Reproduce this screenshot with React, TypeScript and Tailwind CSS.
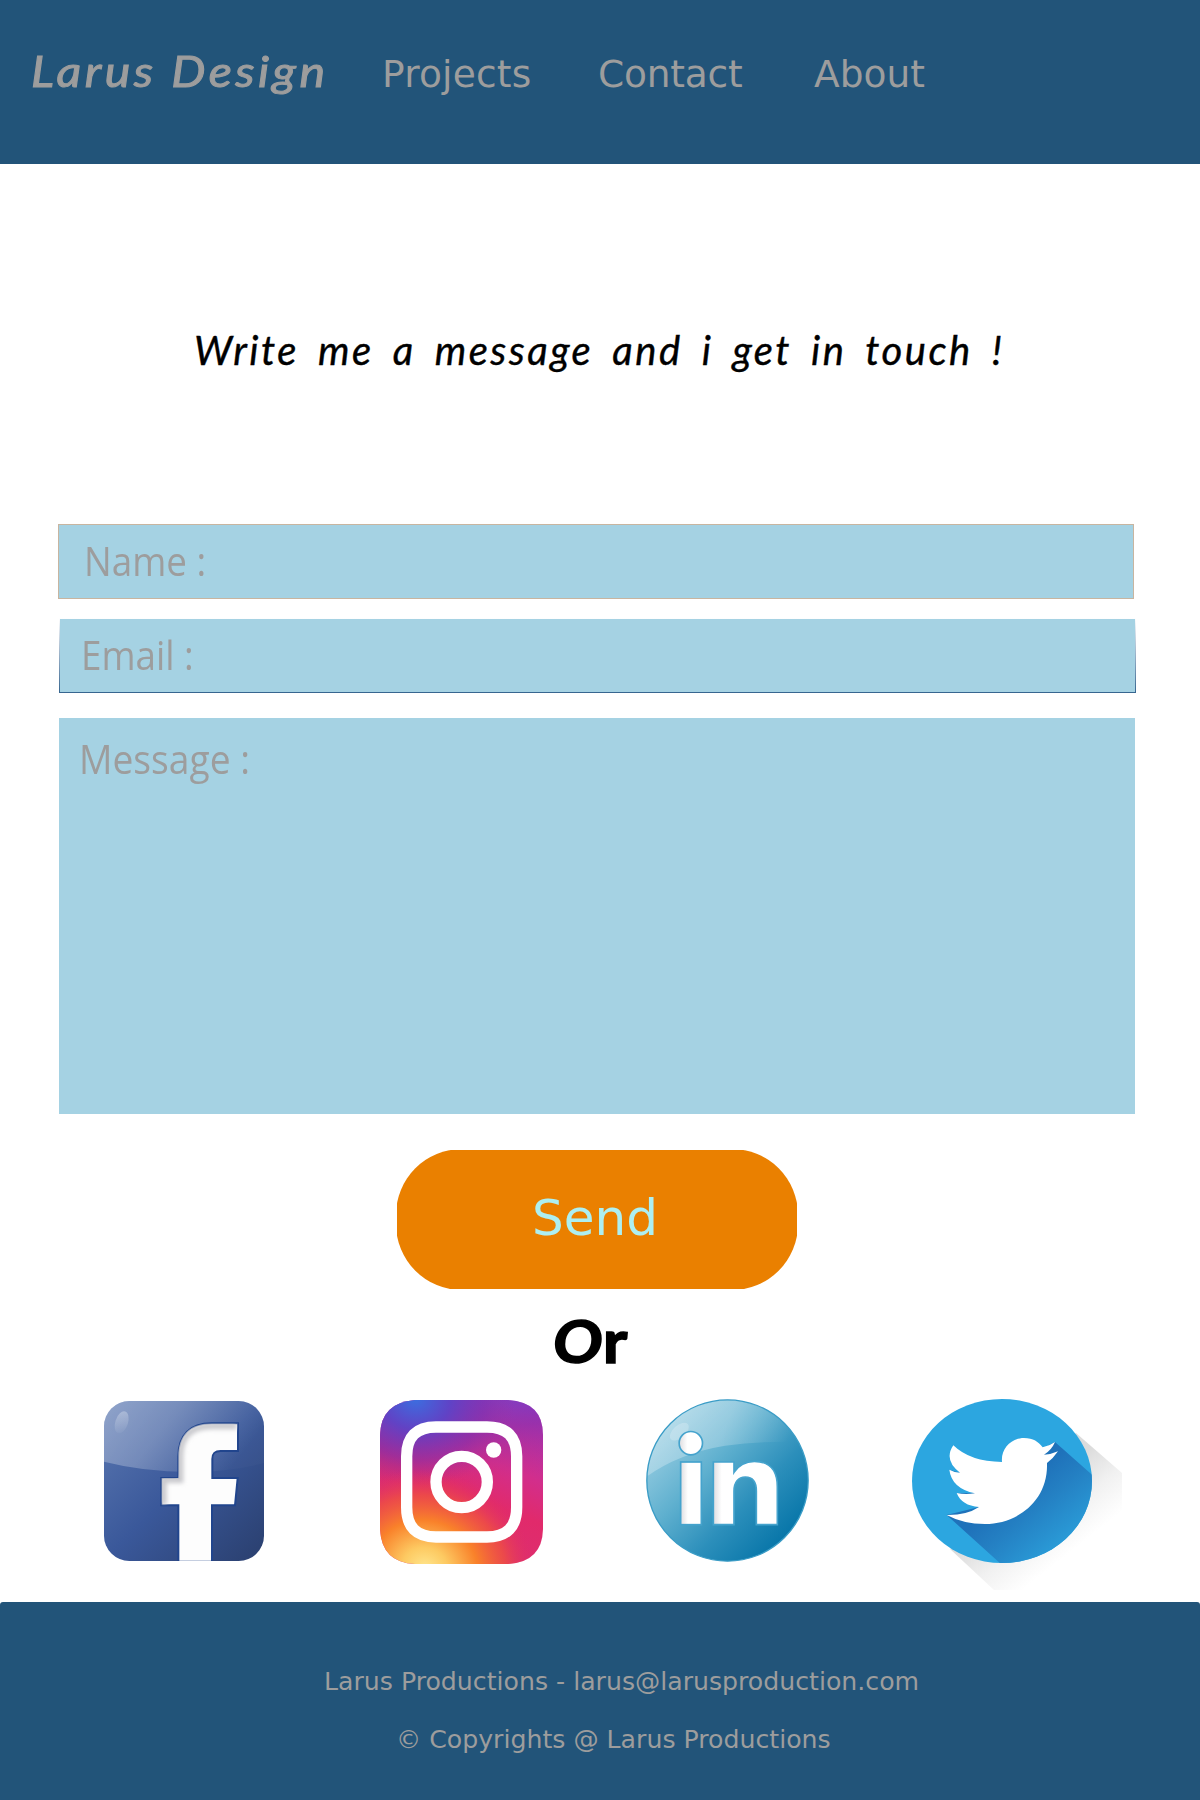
import React from "react";

function FacebookIcon() {
  return (
    <svg viewBox="42 48 480 480" className="h-40 w-40" role="img" aria-label="Facebook">
      <defs>
        <linearGradient id="fbBase" x1="0" y1="0" x2="1" y2="1">
          <stop offset="0" stopColor="#5c79b2" />
          <stop offset="0.5" stopColor="#3a589a" />
          <stop offset="1" stopColor="#2a3f6e" />
        </linearGradient>
        <linearGradient id="fbGloss" x1="0" y1="0" x2="1" y2="0.35">
          <stop offset="0" stopColor="#fff" stopOpacity="0.32" />
          <stop offset="0.45" stopColor="#fff" stopOpacity="0.24" />
          <stop offset="1" stopColor="#fff" stopOpacity="0.02" />
        </linearGradient>
        <linearGradient id="fbSpot" x1="0.3" y1="0" x2="0.6" y2="1">
          <stop offset="0" stopColor="#fff" stopOpacity="0.3" />
          <stop offset="1" stopColor="#fff" stopOpacity="0.04" />
        </linearGradient>
        <clipPath id="fbClip">
          <rect x="42" y="48" width="480" height="480" rx="76" />
        </clipPath>
        <clipPath id="fbLetterClip">
          <path d="M265 530V361H214V279H265V215C265 150 300 115 365 115H444V198H392C373 198 367 205 367 222V279H443L435 361H366V530Z" />
        </clipPath>
        <filter id="fbBlur" x="-20%" y="-20%" width="140%" height="140%">
          <feGaussianBlur stdDeviation="6" />
        </filter>
      </defs>
      <g clipPath="url(#fbClip)">
        <rect x="42" y="48" width="480" height="480" fill="url(#fbBase)" />
        <path d="M42 48H522V234Q410 262 300 261Q160 260 42 230Z" fill="url(#fbGloss)" />
        <ellipse cx="95" cy="112" rx="19" ry="34" transform="rotate(18 95 112)" fill="url(#fbSpot)" />
        <path
          d="M265 530V361H214V279H265V215C265 150 300 115 365 115H444V198H392C373 198 367 205 367 222V279H443L435 361H366V530Z"
          fill="#fdfdfd"
          stroke="#21458d"
          strokeWidth="6"
        />
        <g clipPath="url(#fbLetterClip)">
          <path
            d="M220 359V284H270V215C270 153 303 123 365 123H440"
            fill="none"
            stroke="#c9c9cd"
            strokeWidth="20"
            filter="url(#fbBlur)"
          />
        </g>
      </g>
    </svg>
  );
}

function InstagramIcon() {
  const shape =
    "M150 44H429Q534 50 534 149V431Q532 530 429 536H150Q50 532 45 431V149Q48 52 150 44Z";
  return (
    <svg viewBox="45 44 489 492" className="h-[164px] w-[163px]" role="img" aria-label="Instagram">
      <defs>
        <linearGradient id="igBase" x1="0.9" y1="0" x2="0.5" y2="1">
          <stop offset="0" stopColor="#9a33bd" />
          <stop offset="0.4" stopColor="#d22e8c" />
          <stop offset="0.62" stopColor="#e12a6b" />
          <stop offset="1" stopColor="#dc3070" />
        </linearGradient>
        <linearGradient id="igPurple" gradientUnits="userSpaceOnUse" x1="250" y1="44" x2="285" y2="300">
          <stop offset="0" stopColor="#6a46cc" />
          <stop offset="0.4" stopColor="#8a30a8" stopOpacity="0.85" />
          <stop offset="1" stopColor="#c22d85" stopOpacity="0" />
        </linearGradient>
        <radialGradient
          id="igBlue"
          gradientUnits="userSpaceOnUse"
          cx="0"
          cy="0"
          r="1"
          gradientTransform="translate(150 40) rotate(12) scale(300 260)"
        >
          <stop offset="0" stopColor="#3b6fe0" />
          <stop offset="0.35" stopColor="#5a44c8" stopOpacity="0.9" />
          <stop offset="0.7" stopColor="#7d2fae" stopOpacity="0.5" />
          <stop offset="1" stopColor="#a02f9a" stopOpacity="0" />
        </radialGradient>
        <radialGradient
          id="igWarm"
          gradientUnits="userSpaceOnUse"
          cx="0"
          cy="0"
          r="1"
          gradientTransform="translate(180 545) rotate(14) scale(330 290)"
        >
          <stop offset="0" stopColor="#ffe58c" />
          <stop offset="0.2" stopColor="#fdca62" />
          <stop offset="0.48" stopColor="#f9812a" />
          <stop offset="0.74" stopColor="#f0523f" stopOpacity="0.75" />
          <stop offset="1" stopColor="#e02d66" stopOpacity="0" />
        </radialGradient>
      </defs>
      <path d={shape} fill="url(#igBase)" />
      <path d={shape} fill="url(#igPurple)" opacity="0.6" />
      <path d={shape} fill="url(#igBlue)" />
      <path d={shape} fill="url(#igWarm)" />
      <path
        d="M213 125H366Q455 125 455 213V366Q455 455 366 455H213Q125 455 125 366V213Q125 125 213 125Z"
        fill="none"
        stroke="#fff"
        strokeWidth="34"
      />
      <circle cx="290" cy="290" r="77" fill="none" stroke="#fff" strokeWidth="34" />
      <circle cx="386" cy="194" r="23" fill="#fff" />
    </svg>
  );
}

function LinkedInIcon() {
  const n =
    "M235 231H297V262Q318 229 358 229C408 229 427 262 427 305V419H364V318C364 290 352 276 331 276C310 276 297 292 297 318V419H235Z";
  return (
    <svg viewBox="33 42 489 489" className="h-[163px] w-[163px]" role="img" aria-label="LinkedIn">
      <defs>
        <linearGradient id="liBase" x1="0.1" y1="0.1" x2="0.87" y2="0.84">
          <stop offset="0" stopColor="#a3d3e5" />
          <stop offset="0.4" stopColor="#5fb0cf" />
          <stop offset="0.7" stopColor="#2c8fbb" />
          <stop offset="1" stopColor="#0876a9" />
        </linearGradient>
        <linearGradient id="liGloss" x1="0" y1="0.2" x2="1" y2="0.4">
          <stop offset="0" stopColor="#fff" stopOpacity="0.28" />
          <stop offset="0.5" stopColor="#fff" stopOpacity="0.25" />
          <stop offset="0.9" stopColor="#fff" stopOpacity="0" />
        </linearGradient>
        <linearGradient id="liStem" x1="0" y1="0" x2="1" y2="0">
          <stop offset="0" stopColor="#dedde0" />
          <stop offset="0.35" stopColor="#fff" />
        </linearGradient>
        <linearGradient id="liArch" x1="0" y1="0" x2="1" y2="0">
          <stop offset="0" stopColor="#dedde0" />
          <stop offset="0.13" stopColor="#fff" />
        </linearGradient>
        <clipPath id="liClip">
          <circle cx="277.5" cy="286.5" r="243" />
        </clipPath>
      </defs>
      <circle cx="277.5" cy="286.5" r="242" fill="url(#liBase)" />
      <g clipPath="url(#liClip)">
        <path d="M33 42H522V172Q400 165 270 182Q130 205 33 276Z" fill="url(#liGloss)" />
        <ellipse cx="133" cy="140" rx="34" ry="19" transform="rotate(-42 133 140)" fill="#fff" opacity="0.22" />
      </g>
      <circle cx="277.5" cy="286.5" r="242" fill="none" stroke="#3a9cc6" strokeWidth="4" />
      <g stroke="#45a3cd" strokeWidth="5">
        <circle cx="167.5" cy="174.5" r="35" fill="url(#liStem)" />
        <rect x="137" y="231" width="62" height="188" fill="url(#liStem)" />
        <path d={n} fill="url(#liArch)" />
      </g>
    </svg>
  );
}

function TwitterIcon() {
  return (
    <svg viewBox="36 42 630 573" className="h-[191px] w-[210px]" role="img" aria-label="Twitter">
      <defs>
        <linearGradient id="twCast" gradientUnits="userSpaceOnUse" x1="340" y1="320" x2="490" y2="500">
          <stop offset="0" stopColor="#1f72ba" />
          <stop offset="0.35" stopColor="#2480c3" />
          <stop offset="1" stopColor="#2b9fda" />
        </linearGradient>
        <linearGradient id="twDrop" gradientUnits="userSpaceOnUse" x1="370" y1="345" x2="500" y2="510">
          <stop offset="0" stopColor="#dcdcdc" />
          <stop offset="0.5" stopColor="#f1f1f1" />
          <stop offset="1" stopColor="#ffffff" />
        </linearGradient>
        <clipPath id="twClip">
          <ellipse cx="306" cy="288" rx="270" ry="246" />
        </clipPath>
      </defs>
      <path d="M528 144L666 264V615H282L150 492Z" fill="url(#twDrop)" />
      <ellipse cx="306" cy="288" rx="270" ry="246" fill="#2ca6e0" />
      <g clipPath="url(#twClip)">
        <path d="M465 171L590 282V540H306L140 390L237 366L170 324L225 325L430 190Z" fill="url(#twCast)" />
        <path d="M148 254L190 276L180 263ZM170 324L215 340L225 325ZM237 366L190 386L215 392Z" fill="#2179bf" />
      </g>
      <path
        d="M140 390Q200 391 237 366Q185 362 170 324Q195 330 225 325Q155 310 148 254Q162 262 180 263Q130 225 160 181Q210 230 306 231C302 190 335 159 372 159C400 159 415 170 428 187Q448 183 465 171Q455 195 432 209Q455 208 474 199Q460 220 441 234C445 350 350 417 255 417Q190 417 140 390Z"
        fill="#fff"
      />
    </svg>
  );
}

function Header() {
  return (
    <header className="flex h-41 items-baseline bg-[#225479] pt-[50px] pl-[31px] leading-none text-[#9d9d9d]">
      <div className="w-[351px]">
        <a className="inline-block origin-left scale-x-[1.15] whitespace-nowrap font-['Lato'] text-[42px] leading-none italic tracking-[3px] [-webkit-text-stroke:1px_#9d9d9d]">
          Larus Design
        </a>
      </div>
      <nav className="flex font-['DejaVu_Sans'] text-[37.5px] leading-none">
        <a className="w-[216px] tracking-[0.2px]">Projects</a>
        <a className="w-[216px] -tracking-[0.2px]">Contact</a>
        <a>About</a>
      </nav>
    </header>
  );
}

function ContactForm() {
  return (
    <form className="flex flex-col pl-[58px] font-['Open_Sans'] text-[40px] leading-none text-[#9d9d9d]">
      <div className="h-[75px] w-[1076px] border border-[#c8b5a0] bg-[#a5d2e3] pt-4 pl-[25px]">
        <label className="inline-block origin-left scale-x-[0.92]">Name :</label>
      </div>
      <div className="mt-[19px] ml-px h-[75px] w-[1077px] bg-linear-to-b from-white to-[#35658f] p-px">
        <div className="h-full bg-[#a5d2e3] pt-4 pl-[21px]">
          <label className="inline-block origin-left scale-x-[0.92]">Email :</label>
        </div>
      </div>
      <div className="mt-[25px] ml-px h-[396px] w-[1076px] bg-[#a5d2e3] pt-[21px] pl-5">
        <label className="inline-block origin-left scale-x-[0.93]">Message :</label>
      </div>
      <button
        type="button"
        className="mt-9 ml-[339px] h-[139px] w-[400px] overflow-hidden font-['DejaVu_Sans'] text-[50px] leading-none text-[#adeff1]"
      >
        <span className="-m-px flex h-[141px] w-[402px] items-center justify-center rounded-[66px] bg-[#ea8000] pr-1 pb-1">
          Send
        </span>
      </button>
    </form>
  );
}

export default function App() {
  return (
    <div className="flex h-[1800px] w-[1200px] flex-col overflow-hidden bg-white">
      <Header />
      <h1 className="mt-[166px] mb-[154px] h-10 pl-[194px] font-['Lato'] text-[40px] leading-none whitespace-nowrap text-black italic tracking-[2.5px] [-webkit-text-stroke:0.4px_#000] [word-spacing:7.2px]">
        Write me a message and i get in touch !
      </h1>
      <ContactForm />
      <p className="mt-[21px] flex h-[69px] items-baseline pl-[553px] font-['Lato'] text-[60px] leading-none font-bold text-black [-webkit-text-stroke:1.5px_#000]">
        <span className="flex origin-left scale-x-[1.1] items-baseline">
          <span className="italic">O</span>
          <span>r</span>
        </span>
      </p>
      <div className="mt-5 flex h-[203px] items-start pl-[104px]">
        <div className="w-[276px] pt-0.5">
          <FacebookIcon />
        </div>
        <div className="w-[266px] pt-px">
          <InstagramIcon />
        </div>
        <div className="w-[266px]">
          <LinkedInIcon />
        </div>
        <TwitterIcon />
      </div>
      <footer className="h-[198px] rounded-t-[3px] bg-[#225479] pt-[67px] font-['DejaVu_Sans'] text-[25.2px] leading-none text-[#9d9d9d]">
        <p className="pl-[324px] whitespace-nowrap">Larus Productions - larus@larusproduction.com</p>
        <p className="mt-[33px] pl-[396px] whitespace-nowrap">© Copyrights @ Larus Productions</p>
      </footer>
    </div>
  );
}
